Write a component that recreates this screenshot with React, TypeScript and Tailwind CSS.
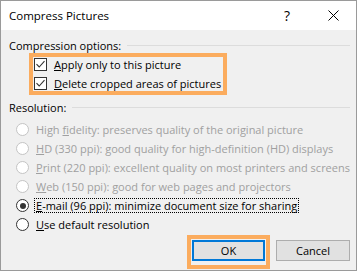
import React from "react";

const options = [
  { before: "High ", key: "f", after: "idelity: preserves quality of the original picture", disabled: true },
  { before: "", key: "H", after: "D (330 ppi): good quality for high-definition (HD) displays", disabled: true },
  { before: "", key: "P", after: "rint (220 ppi): excellent quality on most printers and screens", disabled: true },
  { before: "", key: "W", after: "eb (150 ppi): good for web pages and projectors", disabled: true },
  { before: "", key: "E", after: "-mail (96 ppi): minimize document size for sharing", checked: true },
  { before: "", key: "U", after: "se default resolution" },
];

function CheckBox() {
  return (
    <span className="w-[13px] h-[13px] border border-[#333333] bg-white flex items-center justify-center shrink-0">
      <svg width="11" height="11" viewBox="0 0 11 11">
        <path d="M1.5 5.2 L4.2 8 L9.5 2.2" fill="none" stroke="#333333" strokeWidth="1.1" />
      </svg>
    </span>
  );
}

function Radio({ disabled, checked }: { disabled?: boolean; checked?: boolean }) {
  return (
    <span
      className={
        disabled
          ? "w-[13px] h-[13px] rounded-full border border-[#c4c4c4] bg-white shrink-0"
          : "w-[13px] h-[13px] rounded-full border border-[#333333] bg-white flex items-center justify-center shrink-0"
      }
    >
      {checked && <span className="w-[6px] h-[6px] rounded-full bg-[#333333]" />}
    </span>
  );
}

function SectionTitle({ label }: { label: string }) {
  return (
    <div className="h-[16px] flex items-center pl-[8px] pr-[6px]">
      <span>{label}</span>
      <span className="flex-1 h-px bg-[#dcdcdc] ml-[6px]" />
    </div>
  );
}

export default function App() {
  return (
    <div className="w-[357px] h-[271px] bg-[#f0f0f0] border border-[#9a9a9a] flex flex-col text-[11px] text-black font-['Open_Sans',sans-serif] leading-none overflow-hidden">
      {/* title bar */}
      <div className="h-[29px] bg-white flex items-center shrink-0">
        <span className="pl-[8px] text-[11.5px]">Compress Pictures</span>
        <div className="ml-auto flex h-full">
          <span className="w-[46px] flex items-center justify-center text-[14px]">?</span>
          <span className="w-[46px] flex items-center justify-center">
            <svg width="11" height="11" viewBox="0 0 11 11">
              <path d="M0.5 0.5 L10.5 10.5 M10.5 0.5 L0.5 10.5" stroke="#000" strokeWidth="1" />
            </svg>
          </span>
        </div>
      </div>

      <div className="mt-[7px]">
        <SectionTitle label="Compression options:" />
      </div>

      <div className="ml-[28px] w-[198px] border-[4px] border-[#fbac5e] pl-[1px] flex flex-col gap-[4px] h-[42px]">
        <div className="h-[15px] flex items-center">
          <CheckBox />
          <span className="ml-[7px]">
            <span className="underline">A</span>pply only to this picture
          </span>
        </div>
        <div className="h-[15px] flex items-center">
          <CheckBox />
          <span className="ml-[7px]">
            <span className="underline">D</span>elete cropped areas of pictures
          </span>
        </div>
      </div>

      <div className="mt-[4px]">
        <SectionTitle label="Resolution:" />
      </div>

      <div className="mt-[5px] flex flex-col pl-[15px]">
        {options.map((o) => (
          <div key={o.key} className="h-[19px] flex items-center">
            <Radio disabled={o.disabled} checked={o.checked} />
            <span
              className={
                o.checked
                  ? "ml-[5px] px-[1px] py-[1px] border border-dotted border-black"
                  : "ml-[5px] px-[1px] py-[1px] border border-transparent"
              }
            >
              <span className={o.disabled ? "text-[#a0a0a0]" : "text-black"}>
                {o.before}
                <span className="underline">{o.key}</span>
                {o.after}
              </span>
            </span>
          </div>
        ))}
      </div>

      <div className="mt-[1px] flex justify-end items-start pr-[6px] gap-[6px]">
        <div className="border-[4px] border-[#fbac5e] pt-[1px] px-[1px] pb-[4px]">
          <button className="w-[73px] h-[21px] border-2 border-[#0078d7] bg-[#e1e1e1] flex items-center justify-center">
            OK
          </button>
        </div>
        <button className="mt-[5px] w-[74px] h-[21px] border border-[#adadad] bg-[#e1e1e1] flex items-center justify-center">
          Cancel
        </button>
      </div>
    </div>
  );
}
